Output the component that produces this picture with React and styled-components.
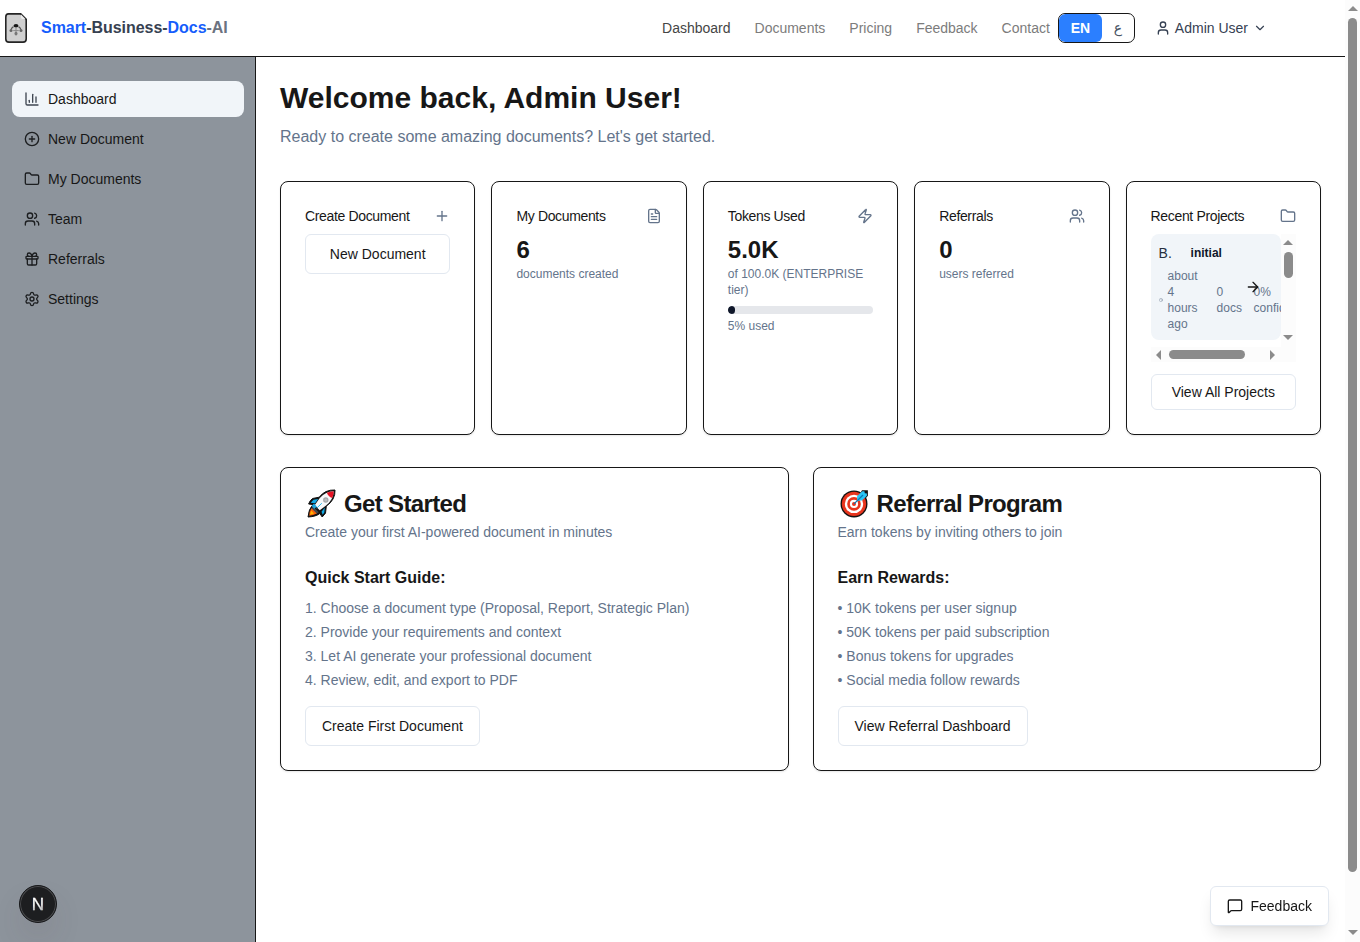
import React from 'react';
import styled, { createGlobalStyle } from 'styled-components';
import {
  ChartColumn, CirclePlus, Folder, Users, Gift, Settings, Plus, FileText, Zap,
  User, ChevronDown, ArrowRight, MessageSquare, Clock,
} from 'lucide-react';

const Global = createGlobalStyle`
  *, *::before, *::after { box-sizing: border-box; }
  html, body { margin: 0; padding: 0; overflow: hidden; background: #fff; }
  body { font-family: "Liberation Sans", Arial, sans-serif; font-size: 14px; line-height: 20px; color: #171717; }
  h1, h2, h3, p, ul, ol { margin: 0; padding: 0; list-style: none; }
  button { font: inherit; color: inherit; background: none; border: 0; padding: 0; }
  svg { display: block; flex-shrink: 0; }
`;

const Viewport = styled.div`
  display: flex;
  width: 1360px;
  height: 942px;
  overflow: hidden;
`;
const Page = styled.div`
  display: flex;
  flex-direction: column;
  width: 1345px;
`;
const Header = styled.header`
  display: flex;
  align-items: center;
  justify-content: space-between;
  height: 57px;
  padding: 0 78px 0 4px;
  border-bottom: 1px solid #171717;
`;
const Brand = styled.div`
  display: flex;
  align-items: center;
  gap: 13px;
  font-size: 16px;
  line-height: 24px;
  font-weight: 700;
  color: #374151;
`;
const BrandText = styled.span`
  margin-top: -1px;
  letter-spacing: -0.04px;
`;
const Tint = styled.span`
  color: ${(p) => (p.$muted ? '#6b7280' : '#155dfc')};
`;
const HeaderRight = styled.div`
  display: flex;
  align-items: center;
`;
const Nav = styled.nav`
  display: flex;
  gap: 24px;
  margin-right: 8px;
`;
const NavLink = styled.a`
  color: ${(p) => (p.$active ? '#454545' : '#7c7c7c')};
`;
const LangToggle = styled.div`
  display: flex;
  width: 77px;
  height: 30px;
  border: 1px solid #171717;
  border-radius: 7px;
  overflow: hidden;
  margin-right: 20px;
`;
const Lang = styled.button`
  width: ${(p) => (p.$active ? '43px' : '32px')};
  border-radius: 6px;
  font-weight: ${(p) => (p.$active ? 600 : 400)};
  color: ${(p) => (p.$active ? '#fff' : '#4a5565')};
  background: ${(p) => (p.$active ? '#2b7fff' : 'transparent')};
  font-family: "Liberation Sans", "DejaVu Sans", sans-serif;
`;
const UserMenu = styled.button`
  display: flex;
  align-items: center;
  gap: 4px;
  color: #364153;
  svg:last-child { margin-left: 1px; }
`;
const Body = styled.div`
  display: flex;
  flex: 1;
`;
const Sidebar = styled.aside`
  display: flex;
  flex-direction: column;
  justify-content: space-between;
  width: 256px;
  padding: 24px 11px 19px 12px;
  background: #8d949c;
  border-right: 1px solid #171717;
`;
const SideNav = styled.nav`
  display: flex;
  flex-direction: column;
  gap: 4px;
`;
const SideLink = styled.a`
  display: flex;
  align-items: center;
  gap: 8px;
  height: 36px;
  padding: 0 12px;
  border-radius: 8px;
  color: #171717;
  background: ${(p) => (p.$active ? '#f1f5f9' : 'transparent')};
  svg { color: ${(p) => (p.$active ? '#3f4652' : '#1c1e20')}; }
`;
const DevBadge = styled.div`
  display: flex;
  align-items: center;
  justify-content: center;
  width: 38px;
  height: 38px;
  margin-left: 7px;
  padding: 2px 0 0 0;
  border-radius: 50%;
  background: #1d1e20;
  border: 1px solid #17181a;
  box-shadow: inset 0 0 0 1px #4b4c4e, 0 16px 32px -8px rgba(90, 60, 70, 0.28);
`;
const DevLetter = styled.span`
  font-size: 17px;
  line-height: 18px;
  color: transparent;
  background: linear-gradient(170deg, #fff 50%, #88898b 95%);
  background-clip: text;
  -webkit-background-clip: text;
  -webkit-text-stroke: 0.3px #ffffff60;
`;
const Main = styled.main`
  flex: 1;
  padding: 24px;
`;
const Heading = styled.h1`
  margin-top: -1px;
  padding-bottom: 1px;
  font-size: 30px;
  line-height: 36px;
  font-weight: 700;
`;
const Lead = styled.p`
  margin-top: 8px;
  font-size: 16px;
  line-height: 24px;
  color: #64748b;
`;
const StatGrid = styled.section`
  display: grid;
  grid-template-columns: repeat(5, minmax(0, 1fr));
  gap: 16px;
  margin-top: 32px;
`;
const InfoGrid = styled.section`
  display: grid;
  grid-template-columns: repeat(2, minmax(0, 1fr));
  gap: 24px;
  margin-top: 32px;
`;
const Card = styled.article`
  padding: 24px;
  border: 1px solid #171717;
  border-radius: 8px;
  background: #fff;
  box-shadow: 0 1px 2px rgba(0, 0, 0, 0.1);
`;
const StatHead = styled.div`
  display: flex;
  align-items: center;
  justify-content: space-between;
  margin-bottom: 8px;
  svg { color: #64748b; }
`;
const StatTitle = styled.h3`
  font-size: 14px;
  font-weight: 400;
  line-height: 20px;
  letter-spacing: -0.35px;
  white-space: nowrap;
`;
const StatValue = styled.div`
  font-size: 24px;
  line-height: 32px;
  font-weight: 700;
`;
const Small = styled.p`
  font-size: 12px;
  line-height: 16px;
  color: #64748b;
  margin-top: ${(p) => p.$top || 0}px;
`;
const Track = styled.div`
  height: 8px;
  margin-top: 8px;
  border-radius: 4px;
  background: #e5e7eb;
  overflow: hidden;
`;
const Fill = styled.div`
  height: 100%;
  border-radius: 4px;
  background: #0f172a;
`;
const OutlineButton = styled.button`
  display: flex;
  align-items: center;
  justify-content: center;
  width: ${(p) => (p.$full ? '100%' : 'max-content')};
  height: ${(p) => (p.$short ? 36 : 40)}px;
  margin-top: ${(p) => p.$top || 0}px;
  padding: 0 16px;
  border: 1px solid #e2e8f0;
  border-radius: 6px;
  background: #fff;
  white-space: nowrap;
`;
const ScrollBox = styled.div`
  display: grid;
  grid-template-columns: minmax(0, 1fr) 15px;
  grid-template-rows: 113px 15px;
`;
const ProjectItem = styled.div`
  position: relative;
  height: 106px;
  padding: 8px;
  border-radius: 8px;
  background: #f1f5f9;
  overflow: hidden;
`;
const ProjectTop = styled.div`
  display: flex;
  align-items: center;
  height: 22px;
  gap: 18px;
  margin-bottom: 4px;
`;
const ProjectLetter = styled.span`
  width: 14px;
  color: #27303f;
`;
const ProjectStatus = styled.span`
  font-size: 12px;
  font-weight: 700;
  color: #0f172a;
`;
const ProjectMeta = styled.div`
  display: flex;
  align-items: center;
  font-size: 12px;
  line-height: 16px;
  color: #64748b;
`;
const MetaText = styled.span`
  flex: 0 0 ${(p) => p.$width}px;
  margin-left: ${(p) => p.$left}px;
`;
const ArrowOverlay = styled.span`
  position: absolute;
  top: 45px;
  left: 94px;
  color: #171717;
`;
const HBar = styled.div`
  display: flex;
  align-items: center;
  justify-content: space-between;
  padding: 0 6px 0 5px;
  background: #fcfcfc;
`;
const VBar = styled.div`
  display: flex;
  flex-direction: column;
  align-items: center;
  padding: 6px 0 7px;
  background: #fcfcfc;
`;
const Corner = styled.div`
  background: #fcfcfc;
`;
const Thumb = styled.div`
  width: ${(p) => p.$w}px;
  height: ${(p) => p.$h}px;
  margin: ${(p) => p.$m || 0};
  border-radius: 5px;
  background: #8b8b8b;
`;
const Spacer = styled.div`
  flex: 1;
`;
const Triangle = styled.i`
  width: 0;
  height: 0;
  border: 5px solid transparent;
  ${(p) => p.$dir === 'up' && 'border-top: 0; border-bottom: 5px solid #8b8b8b;'}
  ${(p) => p.$dir === 'down' && 'border-bottom: 0; border-top: 5px solid #8b8b8b;'}
  ${(p) => p.$dir === 'left' && 'border-left: 0; border-right: 5px solid #8b8b8b;'}
  ${(p) => p.$dir === 'right' && 'border-right: 0; border-left: 5px solid #8b8b8b;'}
`;
const PageScroll = styled.div`
  display: flex;
  flex-direction: column;
  align-items: center;
  width: 15px;
  padding: 6px 0 7px;
  background: #fcfcfc;
`;
const InfoTitle = styled.h2`
  display: flex;
  align-items: center;
  gap: 8px;
  height: 24px;
  padding-left: 2px;
  font-size: 24px;
  line-height: 24px;
  letter-spacing: -0.65px;
  font-weight: 700;
  svg { margin-top: -1px; }
`;
const InfoSub = styled.p`
  margin-top: 6px;
  color: #64748b;
`;
const InfoLabel = styled.h3`
  margin-top: 24px;
  font-size: 16px;
  line-height: 24px;
  font-weight: 700;
`;
const InfoList = styled.ul`
  display: flex;
  flex-direction: column;
  gap: 4px;
  margin-top: 8px;
  color: #64748b;
`;
const FeedbackButton = styled.button`
  position: fixed;
  top: 886px;
  left: 1210px;
  display: flex;
  align-items: center;
  gap: 7.5px;
  width: 119px;
  height: 40px;
  padding-left: 16px;
  border: 1px solid #e2e8f0;
  border-radius: 6px;
  background: #fff;
  box-shadow: 0 10px 15px -3px rgba(0, 0, 0, 0.1), 0 4px 6px -4px rgba(0, 0, 0, 0.1);
`;

const Logo = () => (
  <svg width="24" height="32" viewBox="0 0 24 32">
    <path d="M4.5 1.9H16.7L22.2 7.4V27Q22.2 30.1 19.1 30.1H4.9Q1.8 30.1 1.8 27V4.9Q1.8 1.9 4.5 1.9Z" fill="#d0d0d0" stroke="#252525" strokeWidth="1.6" />
    <path d="M17 2.6V5.6Q17 7 18.4 7H21.4Z" fill="#ececec" />
    <path d="M9.5 14.6Q7.6 15.6 7.1 17.6M14.5 14.6Q16.4 15.6 16.9 17.6" fill="none" stroke="#555" strokeWidth="1.3" />
    <path d="M12 16V21M9.2 18.6H14.8" fill="none" stroke="#8a8a8a" strokeWidth="1" />
    <ellipse cx="12" cy="13.8" rx="2.4" ry="1.7" fill="#161616" />
    <circle cx="7" cy="18.4" r="1.5" fill="#666" />
    <circle cx="17" cy="18.4" r="1.5" fill="#666" />
    <ellipse cx="12" cy="21.6" rx="1.5" ry="1.9" fill="#777" />
  </svg>
);

const Rocket = () => (
  <svg width="29" height="29" viewBox="0 0 29 29">
    <path d="M28 1Q18 .5 12.2 8.2L5.5 9.5Q3 11.3 1.6 15L6 15.6Q1.5 20 1 28Q9 27.6 12.8 24.5L15.2 28L18.5 24.2L19.3 17.2Q28.5 10.8 28 1Z" fill="#111" stroke="#111" strokeLinejoin="round" />
    <path d="M11.2 10L6.4 10.8L3.7 13.8L8.2 14.2ZM14.5 22.8L15.7 25.8L17.3 23.6L17.8 18.5Z" fill="#12a9e4" />
    <path d="M26.7 2.2Q18 2.5 12.6 9.2L7.7 16.3L12.7 21.3L18.7 16.7Q26.5 10.8 26.7 2.2Z" fill="#f7f9fa" />
    <path d="M26.7 2.2Q23 2.2 19.8 3.7Q21.2 7.7 25.2 9Q26.7 6 26.7 2.2Z" fill="#e81224" />
    <path d="M5.8 17.2L11.8 23.2L9.3 25L4 20.5Z" fill="#40464c" />
    <path d="M4.4 19.3Q2.2 22.7 2.2 26.7Q6.5 26.5 9.8 24.5Z" fill="#f7630c" />
    <path d="M4.3 21.8L3 25.8L7 24.5Z" fill="#ffb900" />
    <path d="M7 14.5L4.6 17L7.4 19.8L9.8 17.4Z" fill="#1aa7e0" />
    <path d="M9.7 19.2L14.8 14.2" stroke="#29b8e8" strokeWidth="1" />
    <circle cx="18.8" cy="11" r="2.7" fill="#a3a6a9" />
    <circle cx="18.8" cy="11" r="1.5" fill="#bbbec0" />
  </svg>
);

const Target = () => (
  <svg width="29" height="29" viewBox="0 0 29 29">
    <circle cx="14" cy="14.9" r="13.5" fill="#111" />
    <circle cx="14" cy="14.9" r="12.2" fill="#e8351e" />
    <circle cx="14" cy="14.9" r="9.2" fill="#fff" />
    <circle cx="14" cy="14.9" r="6.8" fill="#e8351e" />
    <circle cx="14" cy="14.9" r="4.1" fill="#fff" />
    <circle cx="14" cy="14.9" r="2" fill="#e8351e" />
    <path d="M22 1.2H27.9V6.8L26 9L21 3Z" fill="#111" />
    <path d="M16.9 11.7L17.2 7L22.4 2.2H24.4L24.8 4.2L26.9 4.6V6.8L22 11.6Z" fill="#29c5f6" />
    <path d="M14 14.9L23 6" stroke="#087bb8" strokeWidth="1.3" />
  </svg>
);

const sideItems = [
  ['Dashboard', ChartColumn], ['New Document', CirclePlus], ['My Documents', Folder],
  ['Team', Users], ['Referrals', Gift], ['Settings', Settings],
];

function Stat({ title, icon: Icon, children }) {
  return (
    <Card>
      <StatHead>
        <StatTitle>{title}</StatTitle>
        <Icon size={16} />
      </StatHead>
      {children}
    </Card>
  );
}

function Info({ art, title, sub, label, items, action }) {
  return (
    <Card>
      <InfoTitle>{art}{title}</InfoTitle>
      <InfoSub>{sub}</InfoSub>
      <InfoLabel>{label}</InfoLabel>
      <InfoList>{items.map((t) => <li key={t}>{t}</li>)}</InfoList>
      <OutlineButton $top={16}>{action}</OutlineButton>
    </Card>
  );
}

export default function App() {
  const used = 5;
  return (
    <Viewport>
      <Global />
      <Page>
        <Header>
          <Brand>
            <Logo />
            <BrandText><Tint>Smart</Tint>-Business-<Tint>Docs</Tint><Tint $muted>-AI</Tint></BrandText>
          </Brand>
          <HeaderRight>
            <Nav>
              {['Dashboard', 'Documents', 'Pricing', 'Feedback', 'Contact'].map((t, i) => (
                <NavLink key={t} $active={i === 0}>{t}</NavLink>
              ))}
            </Nav>
            <LangToggle><Lang $active>EN</Lang><Lang>ع</Lang></LangToggle>
            <UserMenu><User size={16} />Admin User<ChevronDown size={14} /></UserMenu>
          </HeaderRight>
        </Header>
        <Body>
          <Sidebar>
            <SideNav>
              {sideItems.map(([t, Icon], i) => (
                <SideLink key={t} $active={i === 0}><Icon size={16} />{t}</SideLink>
              ))}
            </SideNav>
            <DevBadge><DevLetter>N</DevLetter></DevBadge>
          </Sidebar>
          <Main>
            <Heading>Welcome back, Admin User!</Heading>
            <Lead>Ready to create some amazing documents? Let's get started.</Lead>
            <StatGrid>
              <Stat title="Create Document" icon={Plus}>
                <OutlineButton $full>New Document</OutlineButton>
              </Stat>
              <Stat title="My Documents" icon={FileText}>
                <StatValue>6</StatValue>
                <Small>documents created</Small>
              </Stat>
              <Stat title="Tokens Used" icon={Zap}>
                <StatValue>5.0K</StatValue>
                <Small>of 100.0K (ENTERPRISE tier)</Small>
                <Track><Fill style={{ width: `${used}%` }} /></Track>
                <Small $top={4}>{used}% used</Small>
              </Stat>
              <Stat title="Referrals" icon={Users}>
                <StatValue>0</StatValue>
                <Small>users referred</Small>
              </Stat>
              <Stat title="Recent Projects" icon={Folder}>
                <ScrollBox>
                  <ProjectItem>
                    <ProjectTop>
                      <ProjectLetter>B.</ProjectLetter>
                      <ProjectStatus>initial</ProjectStatus>
                    </ProjectTop>
                    <ProjectMeta>
                      <Clock size={4} />
                      <MetaText $left={5} $width={32}>about 4 hours ago</MetaText>
                      <MetaText $left={17} $width={26}>0 docs</MetaText>
                      <MetaText $left={11} $width={60}>0% confidence</MetaText>
                    </ProjectMeta>
                    <ArrowOverlay><ArrowRight size={16} /></ArrowOverlay>
                  </ProjectItem>
                  <VBar>
                    <Triangle $dir="up" />
                    <Thumb $w={9} $h={26} $m="7px 0 0" />
                    <Spacer />
                    <Triangle $dir="down" />
                  </VBar>
                  <HBar>
                    <Triangle $dir="left" />
                    <Thumb $w={76} $h={9} $m="0 16px 0 0" />
                    <Triangle $dir="right" />
                  </HBar>
                  <Corner />
                </ScrollBox>
                <OutlineButton $full $short $top={12}>View All Projects</OutlineButton>
              </Stat>
            </StatGrid>
            <InfoGrid>
              <Info
                art={<Rocket />}
                title="Get Started"
                sub="Create your first AI-powered document in minutes"
                label="Quick Start Guide:"
                items={[
                  '1. Choose a document type (Proposal, Report, Strategic Plan)',
                  '2. Provide your requirements and context',
                  '3. Let AI generate your professional document',
                  '4. Review, edit, and export to PDF',
                ]}
                action="Create First Document"
              />
              <Info
                art={<Target />}
                title="Referral Program"
                sub="Earn tokens by inviting others to join"
                label="Earn Rewards:"
                items={[
                  '• 10K tokens per user signup',
                  '• 50K tokens per paid subscription',
                  '• Bonus tokens for upgrades',
                  '• Social media follow rewards',
                ]}
                action="View Referral Dashboard"
              />
            </InfoGrid>
          </Main>
        </Body>
      </Page>
      <PageScroll>
        <Triangle $dir="up" />
        <Thumb $w={9} $h={854} $m="7px 0 0" />
        <Spacer />
        <Triangle $dir="down" />
      </PageScroll>
      <FeedbackButton><MessageSquare size={16} />Feedback</FeedbackButton>
    </Viewport>
  );
}
